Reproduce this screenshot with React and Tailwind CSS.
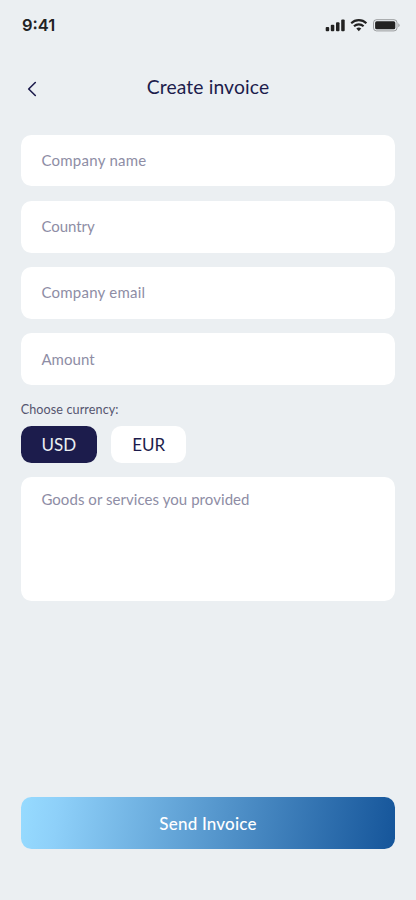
import { useState } from "react";

const fields = [
  { name: "company", label: "Company name", spacing: "tracking-[0.26px]" },
  { name: "country", label: "Country", spacing: "-tracking-[0.04px]" },
  { name: "email", label: "Company email", spacing: "tracking-[0.24px]" },
  { name: "amount", label: "Amount", spacing: "tracking-[0.05px]" },
];

const currencies = [
  { code: "USD", width: "w-[76.3px]" },
  { code: "EUR", width: "w-[75.3px]" },
];

const App = () => {
  const [currency, setCurrency] = useState("USD");

  return (
    <main className="flex h-[900px] w-[416px] flex-col overflow-hidden bg-[#ebeff2] font-['Lato',sans-serif] text-[#1c1c4c]">
      <StatusBar />

      <header className="mt-[13px] grid h-[48px] grid-cols-[64px_1fr_64px] items-center">
        <button type="button" aria-label="Back" className="flex justify-center pt-[2px]">
          <svg width="10" height="16" viewBox="0 0 10 16" fill="none" stroke="#1c1c4c" strokeWidth="1.6" strokeLinecap="round" strokeLinejoin="round">
            <path d="M8.3 1.5 1.7 8l6.6 6.5" />
          </svg>
        </button>
        <h1 className="pb-[1px] text-center text-[19.3px] tracking-[0.12px] whitespace-nowrap">Create invoice</h1>
      </header>

      <form className="mt-[22.5px] flex flex-col px-[20.7px]" onSubmit={(e) => e.preventDefault()}>
        <div className="flex flex-col gap-[14.45px]">
          {fields.map((field) => (
            <Field key={field.name} {...field} />
          ))}
        </div>

        <p className="mt-[17px] h-[16px] text-[12.6px] leading-[16px] tracking-[0.1px] text-[#55556f]">
          Choose currency:
        </p>
        <div className="mt-[7.5px] flex gap-[14px]">
          {currencies.map(({ code, width }) => (
            <button
              key={code}
              type="button"
              onClick={() => setCurrency(code)}
              className={`h-[37.2px] rounded-[10.4px] pt-[1px] text-[17px] ${width} ${
                currency === code ? "bg-[#1c1c4c] text-[#ebeff2]" : "bg-white text-[#1c1c4c]"
              }`}
            >
              {code}
            </button>
          ))}
        </div>

        <textarea
          placeholder="Goods or services you provided"
          className="mt-[14.2px] h-[124.3px] resize-none rounded-[10.4px] bg-white px-[20.7px] pt-[12px] text-[15px] leading-[20px] tracking-[0.06px] outline-none placeholder:text-[#8e8da5]"
        />

        <button
          type="submit"
          className="mt-[195.9px] h-[51.8px] rounded-[10.4px] bg-[linear-gradient(98deg,#97dbff_0%,#8ed0f9_10%,#15559a_100%)] pt-[2px] text-[17px] font-medium tracking-[0.2px] text-white"
        >
          Send Invoice
        </button>
      </form>
    </main>
  );
};

const Field = ({ name, label, spacing }) => (
  <input
    name={name}
    placeholder={label}
    className={`h-[51.8px] rounded-[10.4px] bg-white px-[20.7px] pb-[1px] text-[15px] outline-none placeholder:text-[#8e8da5] ${spacing}`}
  />
);

const StatusBar = () => (
  <div className="flex h-[51px] items-center justify-between pr-[15px] pl-[22px] text-[#222]">
    <span className="font-['Inter',sans-serif] text-[16.5px] font-semibold">9:41</span>
    <svg className="mb-[1px]" width="76" height="14" viewBox="0 0 76 14" fill="currentColor">
      <rect x="0.7" y="9" width="3.5" height="4.2" rx="1" />
      <rect x="5.8" y="6.8" width="3.5" height="6.4" rx="1" />
      <rect x="11" y="4.3" width="3.5" height="8.9" rx="1" />
      <rect x="16.2" y="1.5" width="3.5" height="11.7" rx="1" />
      <g fill="none" stroke="currentColor" strokeWidth="2.1">
        <path d="M26.2 5.2a11 11 0 0 1 15.2 0" />
        <path d="M29 8.3a7 7 0 0 1 9.6 0" />
      </g>
      <path d="m33.8 13.2-2.5-2.6a3.7 3.7 0 0 1 5 0Z" />
      <rect x="48.5" y="1.7" width="23.5" height="11.2" rx="3" fill="none" stroke="currentColor" strokeOpacity="0.4" />
      <rect x="50.1" y="3.3" width="20.2" height="8" rx="1.6" />
      <path d="M73.3 5.3v4a2.2 2.2 0 0 0 0-4Z" fillOpacity="0.4" />
    </svg>
  </div>
);

export default App;
